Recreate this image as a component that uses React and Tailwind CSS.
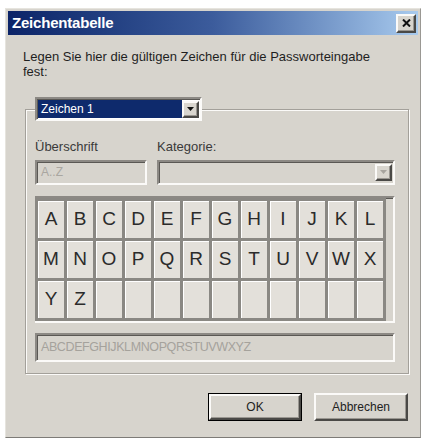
import React from 'react';

const letters = 'ABCDEFGHIJKLMNOPQRSTUVWXYZ'.split('');
// 3 rows of 12 cells, the tail stays empty
const cells = [...letters, ...Array(36 - letters.length).fill('')];

const sunken =
  'border-2 border-t-[#8c8984] border-l-[#8c8984] border-b-[#fbfaf8] border-r-[#fbfaf8] shadow-[inset_1px_1px_0_#5a5854]';
const raised =
  'border-2 border-t-[#fbfaf8] border-l-[#fbfaf8] border-b-[#4a4946] border-r-[#4a4946] shadow-[inset_-1px_-1px_0_#9a9791]';

function ArrowButton({ disabled }) {
  return (
    <div className={`w-[17px] h-[17px] bg-[#d9d6cf] flex items-center justify-center ${raised}`}>
      <svg width="7" height="4" viewBox="0 0 7 4">
        <path d="M0 0h7L3.5 4z" fill={disabled ? '#a7a49e' : '#111'} />
      </svg>
    </div>
  );
}

function CharCell({ ch }) {
  return (
    <div className="h-[37px] bg-[#e3e0da] shadow-[inset_1px_1px_0_#ffffff] flex items-center justify-center text-[19px] text-[#2b2b2b]">
      {ch}
    </div>
  );
}

export default function App() {
  return (
    <div className="w-[426px] h-[440px] bg-white pl-[5px] pt-[8px] font-['Liberation_Sans',Arial,sans-serif]">
      <div className="w-[416px] h-[430px] bg-[#d7d4cd] border border-t-[#e6e4de] border-l-[#e6e4de] border-b-[#7d7b77] border-r-[#9a9893] p-[2px] flex flex-col">
        {/* title bar */}
        <div className="h-[24px] flex items-center justify-between pl-[4px] pr-[2px] bg-gradient-to-r from-[#0c2468] via-[#3c5c9c] to-[#a9cbee]">
          <span className="text-white font-bold text-[15px] tracking-[-0.2px]">Zeichentabelle</span>
          <div className={`w-[20px] h-[19px] bg-[#d7d4cd] flex items-center justify-center ${raised}`}>
            <svg width="9" height="8" viewBox="0 0 9 8">
              <path d="M1 0.5l7 7M8 0.5l-7 7" stroke="#111" strokeWidth="2" />
            </svg>
          </div>
        </div>

        <div className="flex flex-col pl-[15px] pr-[10px]">
          <p className="mt-[14px] text-[13px] leading-[15px] text-[#1f1f1f] w-[370px]">
            Legen Sie hier die gültigen Zeichen für die Passworteingabe fest:
          </p>

          {/* group with the selector as its caption */}
          <fieldset className="mt-[18px] ml-[2px] w-[384px] border border-[#a3a09a] shadow-[inset_1px_1px_0_#fbfaf8,1px_1px_0_#fbfaf8] px-[9px] pb-[11px]">
            <legend className={`w-[167px] h-[24px] bg-white flex items-center p-[1px] ${sunken}`}>
              <div className="flex-1 h-full bg-[#0e2a6c] text-white text-[12px] flex items-center pl-[3px]">
                Zeichen 1
              </div>
              <ArrowButton />
            </legend>

            <div className="mt-[16px] flex gap-[10px] text-[13px] text-[#3a3a3a]">
              <span className="w-[112px]">Überschrift</span>
              <span>Kategorie:</span>
            </div>
            <div className="mt-[3px] flex gap-[10px]">
              <div className={`w-[112px] h-[25px] flex items-center pl-[4px] text-[12px] text-[#a9a6a0] ${sunken}`}>
                A..Z
              </div>
              <div className={`w-[238px] h-[25px] flex items-center justify-end pr-[1px] ${sunken}`}>
                <ArrowButton disabled />
              </div>
            </div>

            {/* character table */}
            <div className={`mt-[11px] w-[360px] h-[127px] ${sunken} border-l-0`}>
              <div className="w-[351px] grid grid-cols-12 gap-[3px] p-[3px] bg-[#8a8883]">
                {cells.map((ch, i) => (
                  <CharCell key={i} ch={ch} />
                ))}
              </div>
            </div>

            <div className={`mt-[10px] w-[360px] h-[29px] flex items-center pl-[4px] text-[12.5px] tracking-[-0.4px] text-[#a5a29c] ${sunken}`}>
              ABCDEFGHIJKLMNOPQRSTUVWXYZ
            </div>
          </fieldset>

          <div className="mt-[19px] flex justify-end gap-[12px] text-[12px] text-[#222]">
            <button className="w-[94px] h-[28px] border border-black p-0 bg-[#d7d4cd]">
              <div className={`w-full h-full flex items-center justify-center ${raised}`}>OK</div>
            </button>
            <button className={`w-[94px] h-[28px] bg-[#d7d4cd] flex items-center justify-center ${raised}`}>
              Abbrechen
            </button>
          </div>
        </div>
      </div>
    </div>
  );
}
